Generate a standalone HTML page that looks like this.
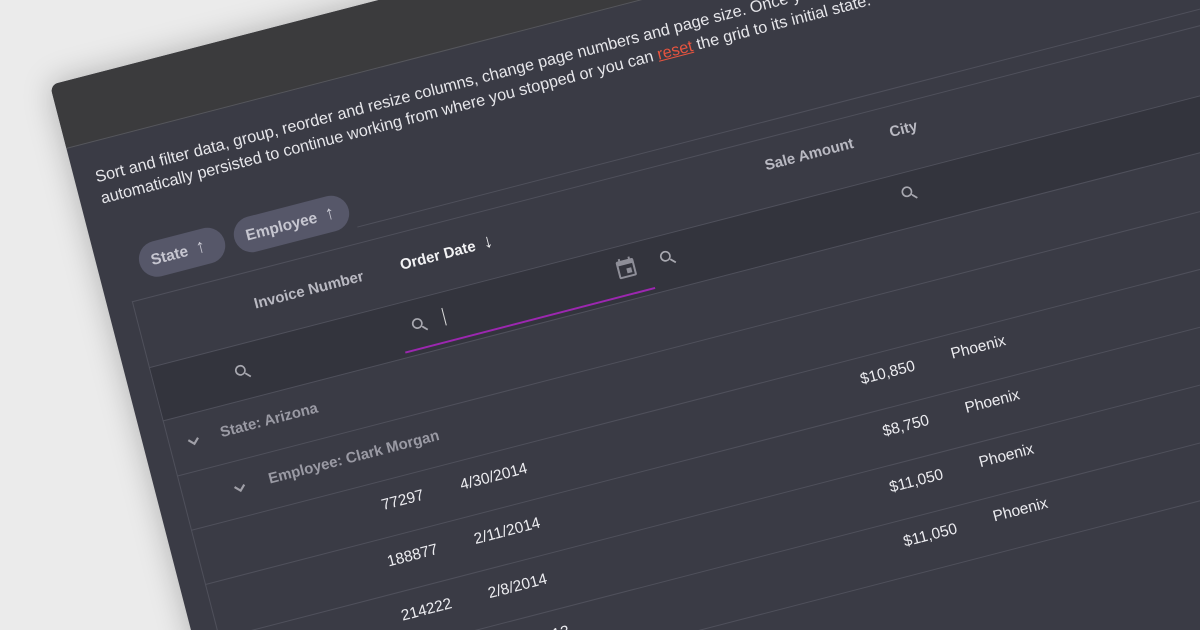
<!DOCTYPE html>
<html><head><meta charset="utf-8"><style>
html,body{margin:0;padding:0;width:1200px;height:630px;overflow:hidden;background:#ebebeb;font-family:"Liberation Sans",sans-serif;}
#wrap{position:absolute;left:0;top:0;width:1200px;height:630px;overflow:hidden;}
#p{position:absolute;left:50px;top:85px;width:1500px;height:900px;background:#3a3b45;border-radius:8px;transform-origin:0 0;transform:rotate(-14.5deg);box-shadow:0 0 30px rgba(0,0,0,.25);overflow:hidden;}
.hd{position:absolute;left:0;top:0;width:100%;height:65px;background:#3b3b3d;border-bottom:1px solid #55565c;}
.a{position:absolute;white-space:nowrap;}
.t{color:#e6e6ea;font-size:16.3px;line-height:18px;}
.ln{position:absolute;left:25px;width:1475px;height:1px;background:#4f505b;}
.chip{position:absolute;height:36px;border-radius:18px;background:#565769;color:#c6c6d0;font-size:15.5px;font-weight:bold;line-height:36px;padding-left:12px;box-sizing:border-box;}
.ar{font-size:19px;font-weight:normal;}
.h{color:#b9b9c2;font-size:15px;font-weight:bold;line-height:18px;}
.g{color:#9a9aa4;font-size:15px;font-weight:bold;line-height:18px;}
.d{color:#ececf0;font-size:15.5px;line-height:18px;}
.r{text-align:right;}
svg{position:absolute;}
</style></head><body>
<div id="wrap">
<div id="p">
<div class="hd"></div>
<div class="a t" style="left:21px;top:92px">Sort and filter data, group, reorder and resize columns, change page numbers and page size. Once you finish customizing the grid, your settings are</div>
<div class="a t" style="left:21px;top:114px">automatically persisted to continue working from where you stopped or you can <span style="color:#e8543f;text-decoration:underline">reset</span> the grid to its initial state.</div>

<div class="ln" style="top:214px;left:262px"></div>
<div class="chip" style="left:42px;top:177px;width:88px">State &nbsp;<span class="ar">↑</span></div>
<div class="chip" style="left:140px;top:177px;width:118px">Employee &nbsp;<span class="ar">↑</span></div>

<div style="position:absolute;left:25px;top:230px;width:1px;height:700px;background:#4f505b"></div>
<div class="ln" style="top:230px"></div>
<div style="position:absolute;left:26px;top:298px;width:1474px;height:55px;background:#33343d"></div>
<div class="ln" style="top:298px"></div>
<div class="ln" style="top:353px"></div>
<div class="ln" style="top:410px"></div>
<div class="ln" style="top:466px"></div>
<div class="ln" style="top:522px"></div>
<div class="ln" style="top:578px"></div>
<div class="ln" style="top:634px"></div>
<div class="ln" style="top:690px"></div>

<div class="a h" style="left:143px;top:255px">Invoice Number</div>
<div class="a h" style="left:294px;top:253px;color:#f2f2f4">Order Date &nbsp;<span class="ar">↓</span></div>
<div class="a h" style="left:672px;top:249px">Sale Amount</div>
<div class="a h" style="left:801px;top:248px">City</div>

<svg width="20" height="20" viewBox="0 0 24 24" style="left:105px;top:316px"><path fill="#a8a8b0" d="M15.5 14h-.8l-.3-.3A6.5 6.5 0 1 0 9.5 16a6.5 6.5 0 0 0 4.2-1.6l.3.3v.8l5 5 1.5-1.5-5-5zm-6 0a4.5 4.5 0 1 1 0-9 4.5 4.5 0 0 1 0 9z"/></svg>
<svg width="20" height="20" viewBox="0 0 24 24" style="left:288px;top:315px"><path fill="#a8a8b0" d="M15.5 14h-.8l-.3-.3A6.5 6.5 0 1 0 9.5 16a6.5 6.5 0 0 0 4.2-1.6l.3.3v.8l5 5 1.5-1.5-5-5zm-6 0a4.5 4.5 0 1 1 0-9 4.5 4.5 0 0 1 0 9z"/></svg>
<div style="position:absolute;left:323px;top:314px;width:1px;height:18px;background:#ddd"></div>
<svg width="24" height="24" viewBox="0 0 24 24" style="left:500px;top:309px"><path fill="#8e8e98" d="M19 4h-1V2h-2v2H8V2H6v2H5a2 2 0 0 0-2 2v14a2 2 0 0 0 2 2h14a2 2 0 0 0 2-2V6a2 2 0 0 0-2-2zm0 16H5V9h14v11zm-7-7h5v5h-5z"/></svg>
<div style="position:absolute;left:277px;top:347px;width:258px;height:2px;background:#9c27b0"></div>
<svg width="20" height="20" viewBox="0 0 24 24" style="left:545px;top:312px"><path fill="#a8a8b0" d="M15.5 14h-.8l-.3-.3A6.5 6.5 0 1 0 9.5 16a6.5 6.5 0 0 0 4.2-1.6l.3.3v.8l5 5 1.5-1.5-5-5zm-6 0a4.5 4.5 0 1 1 0-9 4.5 4.5 0 0 1 0 9z"/></svg>
<svg width="20" height="20" viewBox="0 0 24 24" style="left:795px;top:310px"><path fill="#a8a8b0" d="M15.5 14h-.8l-.3-.3A6.5 6.5 0 1 0 9.5 16a6.5 6.5 0 0 0 4.2-1.6l.3.3v.8l5 5 1.5-1.5-5-5zm-6 0a4.5 4.5 0 1 1 0-9 4.5 4.5 0 0 1 0 9z"/></svg>

<svg width="20" height="20" viewBox="0 0 24 24" style="left:40px;top:371px"><path fill="none" stroke="#a0a0a8" stroke-width="2.6" d="M6 9l6 6 6-6"/></svg>
<div class="a g" style="left:78px;top:371px">State: Arizona</div>
<svg width="20" height="20" viewBox="0 0 24 24" style="left:73px;top:428px"><path fill="none" stroke="#a0a0a8" stroke-width="2.6" d="M6 9l6 6 6-6"/></svg>
<div class="a g" style="left:113px;top:428px">Employee: Clark Morgan</div>

<div class="a d r" style="left:159px;width:100px;top:482px">77297</div>
<div class="a d" style="left:297px;top:482px">4/30/2014</div>
<div class="a d r" style="left:667px;width:100px;top:480px">$10,850</div>
<div class="a d" style="left:805px;top:478px">Phoenix</div>

<div class="a d r" style="left:159px;width:100px;top:538px">188877</div>
<div class="a d" style="left:297px;top:538px">2/11/2014</div>
<div class="a d r" style="left:667px;width:100px;top:536px">$8,750</div>
<div class="a d" style="left:805px;top:534px">Phoenix</div>

<div class="a d r" style="left:159px;width:100px;top:594px">214222</div>
<div class="a d" style="left:297px;top:594px">2/8/2014</div>
<div class="a d r" style="left:667px;width:100px;top:592px">$11,050</div>
<div class="a d" style="left:805px;top:590px">Phoenix</div>

<div class="a d r" style="left:159px;width:100px;top:650px">109831</div>
<div class="a d" style="left:297px;top:650px">12/9/2013</div>
<div class="a d r" style="left:667px;width:100px;top:648px">$11,050</div>
<div class="a d" style="left:805px;top:646px">Phoenix</div>
</div>
</div>
</body></html>
